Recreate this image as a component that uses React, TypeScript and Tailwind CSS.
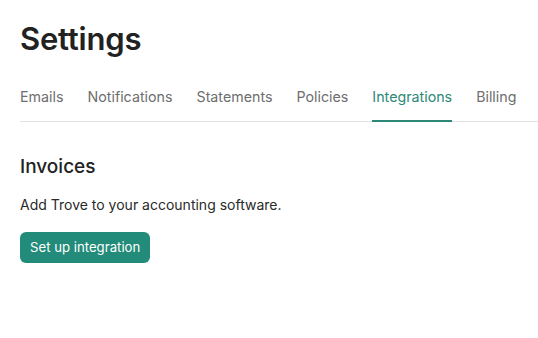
export default function App() {
  const tabs = ['Emails', 'Notifications', 'Statements', 'Policies', 'Integrations', 'Billing']
  const active = 'Integrations'

  return (
    <div className="min-h-[338px] bg-white pl-5 pt-5 text-[#222222]" style={{ fontFamily: 'Inter, "Liberation Sans", sans-serif' }}>
      <h1 className="text-[31px] font-semibold leading-[38px] tracking-[-0.2px]">Settings</h1>

      <div className="mt-[30px] flex gap-6 border-b border-[#e3e3e3]">
        {tabs.map(tab => (
          <div key={tab}
            className={`pb-[14px] text-[14.25px] leading-[18px] border-b-2 -mb-px ${
              tab === active ? 'border-[#2b8877] text-[#2b8877]' : 'border-transparent text-[#6e6e6e]'
            }`}>{tab}</div>
        ))}
      </div>

      <h2 className="mt-[33px] text-[19px] font-medium leading-6">Invoices</h2>
      <p className="mt-[16px] text-[14px] leading-5 text-[#2a2a2a]">Add Trove to your accounting software.</p>
      <button className="mt-[17px] h-[31px] rounded-[6px] bg-[#228b79] px-[10px] text-[13.2px] text-white">
        Set up integration
      </button>
    </div>
  )
}
